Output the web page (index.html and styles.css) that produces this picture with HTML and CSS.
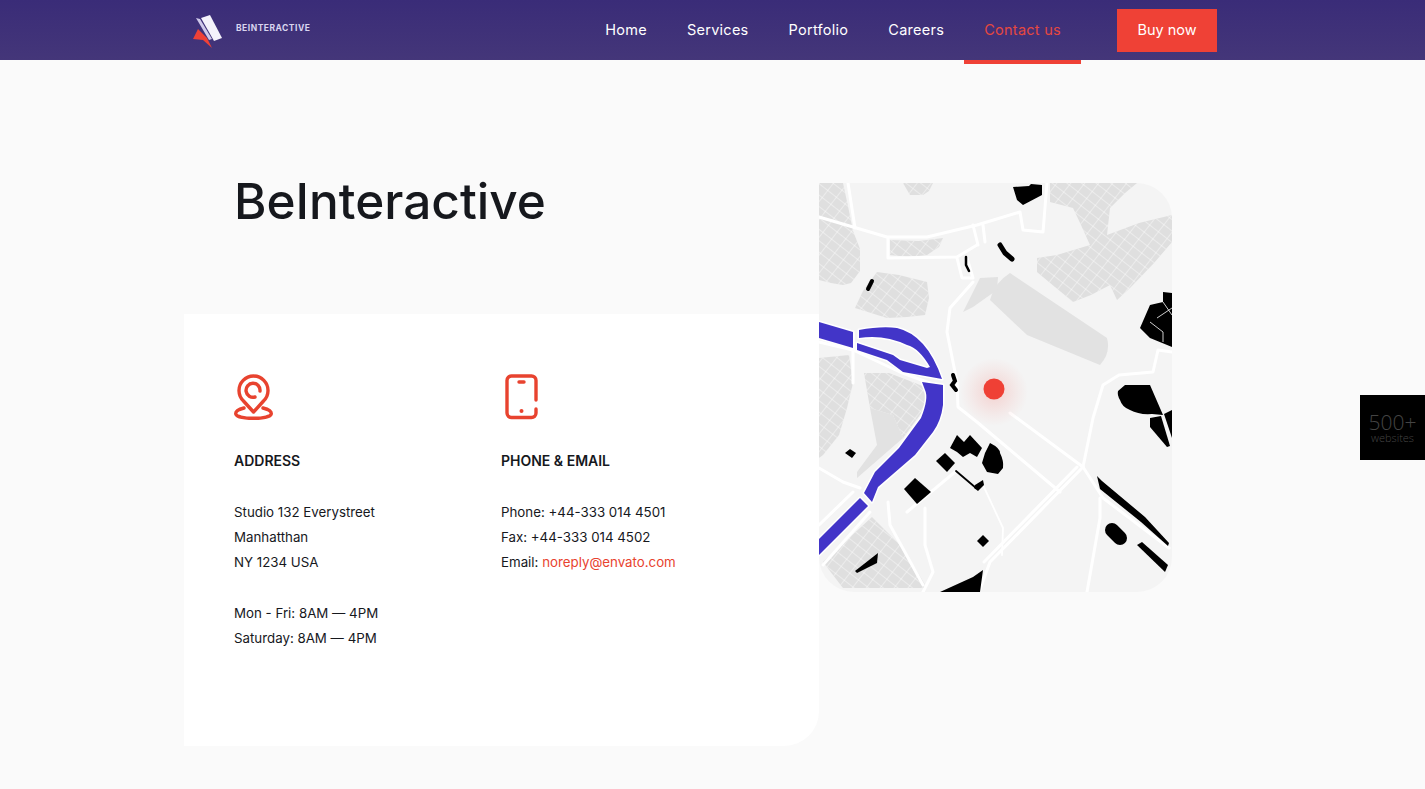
FILE: index.html
```html
<!DOCTYPE html>
<html lang="en">
<head>
<meta charset="utf-8">
<title>BeInteractive</title>
<link rel="stylesheet" href="styles.css">
</head>
<body>
<header class="site-header">
  <a class="logo" href="#">
    <svg class="logo-mark" viewBox="0 0 32 38" width="32" height="38" aria-hidden="true">
      <polygon points="9,7 18,4 30,27 22,30" fill="#f4f2fb"/>
      <polygon points="4,7 8,8 20,28 17,29" fill="#cfc9ea"/>
      <polygon points="6,18 15,27 20,37 11,29 1,28" fill="#ef4136"/>
    </svg>
    <span class="logo-text">BEINTERACTIVE</span>
  </a>
  <nav class="nav">
    <a class="nav-item" href="#">Home</a>
    <a class="nav-item" href="#">Services</a>
    <a class="nav-item" href="#">Portfolio</a>
    <a class="nav-item" href="#">Careers</a>
    <a class="nav-item active" href="#">Contact us</a>
  </nav>
  <a class="buy" href="#">Buy now</a>
</header>

<main class="contact">
  <div class="left">
    <h1 class="title">BeInteractive</h1>
    <section class="card">
      <div class="col">
        <svg class="icon" viewBox="0 0 40 46" width="40" height="46" aria-hidden="true">
          <g fill="none" stroke="#e8432f" stroke-width="3.400" stroke-linecap="round" stroke-linejoin="round">
            <path d="M19.500 38 L9.500 27 A14.500 14.500 0 1 1 29.500 27 Z"/>
            <path d="M26 17 A7 7 0 1 0 21 23"/>
            <path d="M10 34 C4 35.500 1.700 37.500 1.700 39.500 C1.700 42.500 10 44.300 19.500 44.300 C29 44.300 37.300 42.500 37.300 39.500 C37.300 37.500 35 35.500 29 34"/>
          </g>
        </svg>
        <h2 class="heading">ADDRESS</h2>
        <p class="text">Studio 132 Everystreet<br>Manhatthan<br>NY 1234 USA</p>
        <p class="text">Mon - Fri: 8AM — 4PM<br>Saturday: 8AM — 4PM</p>
      </div>
      <div class="col">
        <svg class="icon phone" viewBox="0 0 33 46" width="33" height="46" aria-hidden="true">
          <g fill="none" stroke="#e8432f" stroke-width="3.400" stroke-linecap="round">
            <path d="M31 26 V6.500 A4.500 4.500 0 0 0 26.500 2 H6.500 A4.500 4.500 0 0 0 2 6.500 V39 A4.500 4.500 0 0 0 6.500 43.500 H26.500 A4.500 4.500 0 0 0 31 39 V35"/>
            <path d="M14 8 H19"/>
          </g>
          <circle cx="16.500" cy="37" r="2" fill="#e8432f"/>
        </svg>
        <h2 class="heading">PHONE &amp; EMAIL</h2>
        <p class="text">Phone: +44-333 014 4501<br>Fax: +44-333 014 4502<br>Email: <a class="mail" href="#">noreply@envato.com</a></p>
      </div>
    </section>
  </div>

  <figure class="map">
    <svg viewBox="0 0 353 409" width="353" height="409" role="img" aria-label="Map">
      <defs>
        <pattern id="streets" width="11" height="9" patternUnits="userSpaceOnUse" patternTransform="rotate(38)">
          <path d="M0 0 H11 M0 0 V9" stroke="#fff" stroke-width="0.800" fill="none"/>
        </pattern>
        <radialGradient id="halo">
          <stop offset="0.25" stop-color="#ef4136" stop-opacity="0.14"/>
          <stop offset="0.7" stop-color="#ef4136" stop-opacity="0.05"/>
          <stop offset="1" stop-color="#ef4136" stop-opacity="0"/>
        </radialGradient>
        <filter id="soft" x="0" y="0" width="100%" height="100%">
          <feGaussianBlur stdDeviation="0.400"/>
        </filter>
        <g id="blocks">
          <path d="M0 0 H24 L30 28 L34 48 L41 66 L41 88 L32 100 L24 102 L12 100 L0 97 Z"/>
          <path d="M71 57 L100 58 L124 55 L120 64 L108 72 L90 74 L71 72 Z"/>
          <path d="M84 0 H114 L110 8 L104 12 L91 12 Z"/>
          <path d="M36 125 L44 108 L58 89 L80 92 L108 99 L110 115 L106 132 L88 134 L68 135 Z"/>
          <path d="M231 0 H318 L306 10 L291 25 L288 52 L320 40 L353 32 L353 59 L335 80 L311 105 L298 117 L291 102 L272 112 L254 119 L236 104 L218 89 L218 75 L238 72 L271 62 L262 42 L254 25 L231 19 Z"/>
          <path d="M0 175 L30 172 L34 200 L28 225 L20 252 L4 272 L0 275 Z"/>
          <path d="M45 190 L70 190 L96 200 L106 204 L106 225 L84 255 L74 232 L51 225 Z"/>
          <path d="M4 379 L53 334 L81 362 L96 385 L108 405 L24 405 Z"/>
        </g>
      </defs>
      <g filter="url(#soft)">
      <rect width="353" height="409" fill="#f4f4f4"/>
      <use href="#blocks" fill="#dfdfdf"/>
      <use href="#blocks" fill="url(#streets)"/>
      <g fill="#e2e2e2">
        <path d="M191 90 L288 155 Q292 170 281 182 L208 152 L171 117 Q175 100 191 90 Z"/>
        <polygon points="161,95 179,94 178,107 154,124 144,129"/>
        <polygon points="51,225 74,232 84,255 38,295 38,289 58,262"/>
      </g>
      <g fill="none" stroke="#fff" stroke-linecap="round" stroke-linejoin="round" stroke-width="3">
        <polyline points="0,34 34,44 68,54 108,54 158,42 201,29 204,47 224,49 228,0"/>
        <polyline points="29,0 36,45"/>
        <polyline points="69,55 69,75 138,74 158,62"/>
        <polyline points="154,42 159,62"/>
        <polyline points="164,42 166,59"/>
        <polyline points="138,75 143,95 154,95 148,75"/>
        <polyline points="154,99 131,125 128,149 138,199 139,224 158,239 241,309"/>
        <polyline points="191,230 264,284 284,315 350,365"/>
        <polyline points="264,284 171,379 160,409"/>
        <polyline points="258,284 165,379"/>
        <polyline points="264,284 274,235 284,202 300,192 334,189 339,167 353,169"/>
        <polyline points="281,315 281,335 268,409"/>
        <polyline points="0,159 34,167 81,189 124,205"/>
        <polyline points="34,149 34,200"/>
        <polyline points="0,285 24,299 41,305"/>
        <polyline points="34,309 0,342"/>
        <polyline points="51,329 4,382"/>
        <polyline points="69,319 71,342 104,402"/>
        <polyline points="106,325 106,362 114,389 104,409"/>
        <polyline points="136,289 88,329"/>
        <polyline stroke-width="1.800" points="164,302 184,345 183,372"/>
      </g>
      <g fill="#4335c8" stroke="#fff" stroke-width="3" stroke-linejoin="round" paint-order="stroke">
        <polygon points="0,139 34,149 34,165 0,155"/>
        <path d="M40 147 Q62 143 78 145 Q108 152 123 196 L84 189 L68 177 L38 167 L38 160 L74 172 L81 177 L108 185 L111 184 Q100 165 88 162 Q65 151 40 155 Z"/>
        <path d="M103 199 L124 202 L124 222 Q122 238 114 249 L96 272 L59 304 L53 319 L45 310 L56 289 L80 265 L102 235 Q110 215 106 207 Z"/>
        <polygon points="41,315 49,323 0,372 0,356"/>
      </g>
      <g fill="#000">
        <polygon points="194,4 210,3 212,1 223,2 223,12 204,22 198,17"/>
        <polygon points="344,109 353,110 353,164 331,155 321,145 331,122 344,119"/>
        <path d="M306 202 H331 L344 232 L333 231 Q320 232 311 227 Q303 224 301 217 Q298 212 299 208 Z"/>
        <polygon points="353,227 345,231 353,255"/>
        <polygon points="331,235 342,233 351,263 348,264 331,244"/>
        <polygon points="131,265 138,252 145,259 151,252 163,265 158,274 151,270 144,274 138,269"/>
        <path d="M171 260 Q181 265 181 270 Q185 278 184 285 L179 291 L168 289 L163 280 L166 270 Z"/>
        <polygon points="126,270 136,280 128,289 117,278"/>
        <polygon points="156,302 164,297 165,302 159,308 155,305"/>
        <polygon points="96,295 112,309 98,321 85,306"/>
        <polygon points="31,266 37,270 33,275 26,270"/>
        <polygon points="164,352 170,358 164,364 158,358"/>
        <polygon points="59,370 58,380 38,390 36,388"/>
        <polygon points="121,409 154,394 164,387 161,409"/>
        <polygon points="278,293 283,298 326,334 350,360 349,363 322,339 281,306"/>
        <polygon points="318,362 323,359 349,382 346,389"/>
      </g>
      <g fill="none" stroke="#000" stroke-linecap="round">
        <polyline stroke-width="5" points="181,62 186,70 193,76"/>
        <polyline stroke-width="2.500" points="147,74 147,82 150,88"/>
        <line stroke-width="4" x1="53" y1="98" x2="49" y2="106"/>
        <polyline stroke-width="4" points="134,192 136,198 133,202 137,207"/>
        <line stroke-width="1.800" x1="137" y1="288" x2="157" y2="305"/>
        <line stroke-width="14" x1="293" y1="347" x2="301" y2="355"/>
      </g>
      <g fill="none" stroke="#fff" stroke-width="0.800">
        <polyline points="338,135 353,125"/>
        <polyline points="344,119 353,132"/>
        <polyline points="331,139 344,149 344,159"/>
      </g>
      <circle cx="175" cy="209" r="34" fill="url(#halo)"/>
      <circle cx="175" cy="206" r="10.500" fill="#ef4136"/>
      </g>
    </svg>
  </figure>
</main>

<aside class="badge">
  <span class="badge-num">500+</span>
  <span class="badge-label">websites</span>
</aside>
</body>
</html>
```
FILE: styles.css
```css
* { box-sizing: border-box; }
html, body { margin: 0; height: 100%; }
body {
  background: #fafafa;
  color: #16181d;
  font-family: Inter, "Liberation Sans", sans-serif;
  overflow: hidden;
}
a { color: inherit; text-decoration: none; }

.site-header {
  display: flex;
  align-items: center;
  height: 60px;
  padding: 0 208px 0 192px;
  background: linear-gradient(#3a2c78, #443679);
  position: relative;
}
.logo { display: flex; align-items: center; gap: 12px; }
.logo-mark { display: block; }
.logo-text {
  font-size: 8.5px;
  font-weight: 700;
  letter-spacing: 0.5px;
  color: #d9d5ef;
  margin-bottom: 4px;
}
.nav { display: flex; margin-left: auto; align-self: stretch; }
.nav-item {
  display: flex;
  align-items: center;
  padding: 0 20px 2px;
  font-size: 14.5px;
  letter-spacing: 0.27px;
  color: #fff;
  position: relative;
}
.nav-item.active { color: #e5483f; }
.nav-item.active::after {
  content: "";
  position: absolute;
  left: 0;
  right: 0;
  bottom: -4px;
  height: 4px;
  background: #ef4136;
}
.buy {
  display: flex;
  align-items: center;
  justify-content: center;
  width: 100px;
  height: 43px;
  margin-left: 36px;
  margin-bottom: -1px;
  padding-bottom: 2px;
  background: #ef4136;
  color: #fff;
  font-size: 14.5px;
}

.contact {
  display: grid;
  grid-template-columns: 635px 353px;
  align-items: start;
  padding: 123px 0 0 184px;
}
.title {
  margin: 0;
  padding-left: 50px;
  height: 131px;
  font-size: 49.5px;
  line-height: 36px;
  font-weight: 500;
  color: #16181d;
}
.card {
  display: grid;
  grid-template-columns: 267px 1fr;
  height: 432px;
  padding: 60px 50px 0;
  background: #fff;
  border-bottom-right-radius: 35px;
}
.icon { display: block; height: 46px; }
.phone { margin-left: 4px; }
.heading {
  margin: 29px 0 0;
  font-size: 14px;
  line-height: 24px;
  font-weight: 600;
  color: #16181d;
}
.text {
  margin: 26px 0 0;
  font-size: 13.3px;
  line-height: 25px;
  color: #16181d;
}
.heading + .text { margin-top: 27px; }
.mail { color: #e8432f; }

.map {
  margin: 0;
  width: 353px;
  height: 409px;
  overflow: hidden;
  border-radius: 0 35px 35px 35px;
}
.map svg { display: block; }

.badge {
  position: fixed;
  right: 0;
  top: 395px;
  display: flex;
  flex-direction: column;
  align-items: center;
  justify-content: center;
  width: 65px;
  height: 65px;
  background: #000;
  color: #444;
  font-family: "Open Sans", sans-serif;
}
.badge-num { font-size: 21px; line-height: 20px; font-weight: 300; }
.badge-label { font-size: 11px; line-height: 12px; font-weight: 300; }
```
